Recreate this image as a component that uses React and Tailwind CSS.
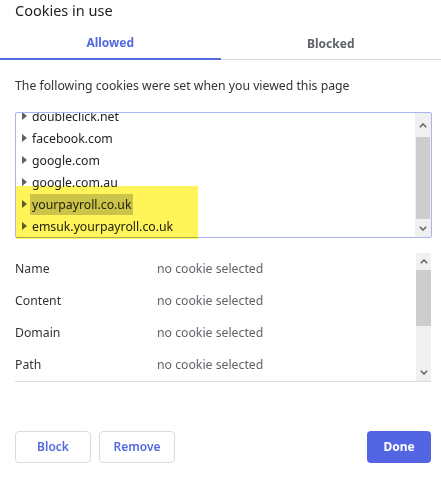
import React from "react";

const Tri = () => (
  <svg width="5" height="8" viewBox="0 0 5 8" className="shrink-0">
    <path d="M0 0 L5 4 L0 8 Z" fill="#5f5f5f" />
  </svg>
);

const Chev = ({ up }) => (
  <svg width="8" height="5" viewBox="0 0 8 5">
    <path
      d={up ? "M0.8 4.2 L4 1 L7.2 4.2" : "M0.8 0.8 L4 4 L7.2 0.8"}
      fill="none"
      stroke="#606060"
      strokeWidth="1.5"
    />
  </svg>
);

const cookies = [
  "doubleclick.net",
  "facebook.com",
  "google.com",
  "google.com.au",
  "yourpayroll.co.uk",
  "emsuk.yourpayroll.co.uk",
];

const fields = ["Name", "Content", "Domain", "Path"];

export default function App() {
  return (
    <div
      className="relative w-[441px] h-[478px] bg-white overflow-hidden text-[#333]"
      style={{ fontFamily: '"Noto Sans", "Open Sans", sans-serif' }}
    >
      <div className="h-[20px] pl-[15px] text-[14.5px] leading-[20px] text-[#222]">Cookies in use</div>

      <div className="mt-[8px] h-[32px] flex">
        <div className="flex-1 flex items-center justify-center border-b-2 border-[#5468e0] text-[12px] font-bold text-[#5468e0]">
          Allowed
        </div>
        <div className="flex-1 flex items-center justify-center border-b border-[#dadce0] pt-[1px] text-[12px] font-bold text-[#5f6368]">
          Blocked
        </div>
      </div>

      <div className="mt-[17px] pl-[15px] text-[12.25px] leading-[18px]">
        The following cookies were set when you viewed this page
      </div>

      <div className="mt-[17px] ml-[15px] w-[417px] h-[126px] border border-[#aab4ee] rounded-[2px] flex overflow-hidden">
        <div className="flex-1 overflow-hidden">
          <div className="-mt-[8px]">
            {cookies.map((c, i) => (
              <div key={c} className="h-[22px] flex items-center pl-[6px] text-[12.25px] text-[#222]">
                <Tri />
                <span className={"ml-[3px] px-[2px] leading-[21px] " + (i === 4 ? "bg-[#cccccc]" : "")}>{c}</span>
              </div>
            ))}
          </div>
        </div>
        <div className="w-[16px] flex flex-col bg-[#f0f0f0]">
          <div className="h-[24px] flex items-center justify-center">
            <Chev up />
          </div>
          <div className="h-[82px] mx-[1px] bg-[#cdcdcd]" />
          <div className="flex-1 flex items-center justify-center">
            <Chev />
          </div>
        </div>
      </div>

      <div className="mt-[15px] ml-[15px] w-[416px] h-[129px] border-b border-[#dadce0] flex">
        <div className="flex-1">
          {fields.map((f) => (
            <div key={f} className="h-[32px] flex items-center text-[12.25px]">
              <div className="w-[142px] text-[#333]">{f}</div>
              <div className="text-[#5f6368]">no cookie selected</div>
            </div>
          ))}
        </div>
        <div className="w-[15px] flex flex-col bg-[#f0f0f0]">
          <div className="h-[17px] flex items-center justify-center">
            <Chev up />
          </div>
          <div className="h-[56px] bg-[#cdcdcd]" />
          <div className="flex-1" />
          <div className="h-[17px] flex items-center justify-center">
            <Chev />
          </div>
        </div>
      </div>

      <div className="mt-[49px] px-[15px] pr-[10px] flex items-center">
        <button className="w-[76px] h-[32px] border border-[#dadce0] rounded-[4px] text-[12px] font-semibold text-[#5468e0] bg-white">
          Block
        </button>
        <button className="ml-[8px] w-[76px] h-[32px] border border-[#dadce0] rounded-[4px] text-[12px] font-semibold text-[#5468e0] bg-white">
          Remove
        </button>
        <div className="flex-1" />
        <button className="w-[64px] h-[32px] rounded-[4px] text-[12px] font-bold text-white bg-[#5465e3]">
          Done
        </button>
      </div>

      <div className="absolute left-[16px] top-[186px] w-[182px] h-[53px] bg-[#fff55a] mix-blend-multiply pointer-events-none" />
    </div>
  );
}
